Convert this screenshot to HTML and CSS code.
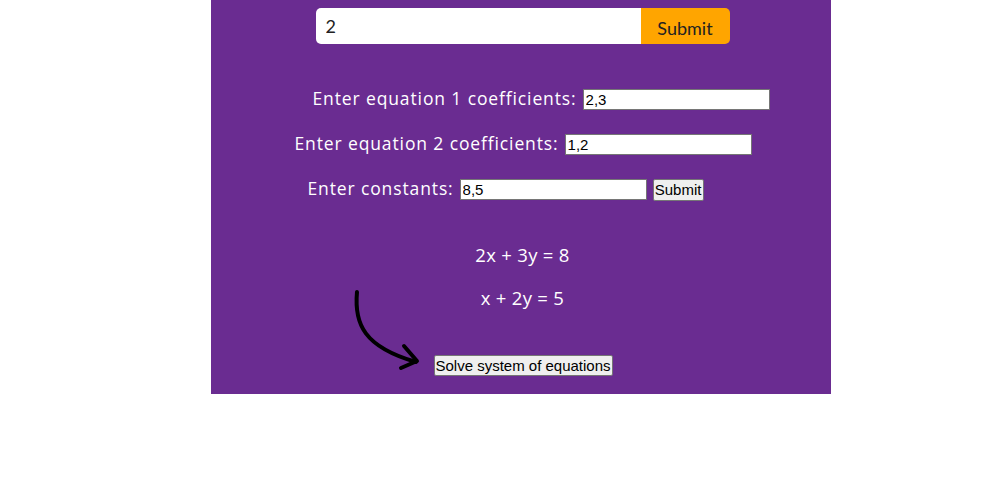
FILE: index.html
```html
<!DOCTYPE html>
<html lang="en">
<head>
<meta charset="utf-8">
<title>System of equations</title>
<link rel="stylesheet" href="styles.css">
</head>
<body>
<main class="panel">
  <form class="search">
    <input class="search-input" type="text" value="2">
    <button class="search-btn" type="button">Submit</button>
  </form>

  <div class="rows">
    <div class="row row-1">
      <label class="lbl">Enter equation 1 coefficients:</label>
      <input class="field" type="text" value="2,3">
    </div>
    <div class="row row-2">
      <label class="lbl">Enter equation 2 coefficients:</label>
      <input class="field" type="text" value="1,2">
    </div>
    <div class="row row-3">
      <label class="lbl">Enter constants:</label>
      <input class="field" type="text" value="8,5">
      <button class="btn" type="button">Submit</button>
    </div>
  </div>

  <div class="equations">
    <p class="eq">2x + 3y = 8</p>
    <p class="eq">x + 2y = 5</p>
  </div>

  <div class="solve">
    <button class="btn" type="button">Solve system of equations</button>
  </div>

  <svg class="arrow" width="80" height="90" viewBox="0 0 80 90" aria-hidden="true">
    <path d="M5 3 C 2 35, 12 58, 64 73" fill="none" stroke="#000" stroke-width="4" stroke-linecap="round"/>
    <path d="M52 57 L 65 72 L 49 79" fill="none" stroke="#000" stroke-width="4" stroke-linecap="round" stroke-linejoin="round"/>
  </svg>
</main>
</body>
</html>
```

FILE: styles.css
```css
html, body {
  margin: 0;
  padding: 0;
  background: #fff;
}

.panel {
  position: relative;
  width: 620px;
  margin-left: 211px;
  background: #6a2c91;
  padding: 8px 0 18px;
  box-sizing: border-box;
  font-family: "Open Sans", "DejaVu Sans", sans-serif;
  color: #fff;
}

.search {
  display: flex;
  justify-content: center;
  padding-left: 3px;
  margin: 0;
}

.search-input {
  box-sizing: border-box;
  width: 325px;
  height: 36px;
  border: none;
  border-radius: 5px 0 0 5px;
  padding: 0 10px;
  font-family: "Lato", sans-serif;
  font-size: 18px;
  color: #222;
  outline: none;
}

.search-btn {
  box-sizing: border-box;
  width: 89px;
  height: 36px;
  border: none;
  border-radius: 0 5px 5px 0;
  background: #ffa500;
  color: #222;
  font-family: "Lato", sans-serif;
  font-size: 18px;
  padding: 4px 0 0;
}

.rows {
  margin-top: 45px;
  display: flex;
  flex-direction: column;
  gap: 24px;
}

.row {
  display: flex;
  justify-content: center;
  align-items: center;
  gap: 6px;
  height: 21px;
}

.row-1 { padding-left: 40px; }
.row-2 { padding-left: 4px; }
.row-3 { padding-right: 31px; }

.lbl {
  font-size: 17.5px;
  font-weight: 500;
  letter-spacing: 0.88px;
  line-height: 21px;
  margin-top: -2px;
  white-space: nowrap;
}

.field {
  box-sizing: border-box;
  width: 187px;
  height: 21px;
  font-family: "Liberation Sans", Arial, sans-serif;
  font-size: 15px;
  padding: 0 2px;
  border: 1px solid #767676;
  background: #fff;
  color: #000;
}

.btn {
  box-sizing: border-box;
  font-family: "Liberation Sans", Arial, sans-serif;
  font-size: 15px;
  line-height: 17px;
  color: #000;
  background: #efefef;
  border: 1px solid #767676;
  border-radius: 2px;
  padding: 1px 0;
  height: 22px;
  white-space: nowrap;
}

.row-3 .btn { width: 51px; }

.equations {
  margin-top: 44px;
  padding-left: 3px;
  text-align: center;
}

.eq {
  margin: 0 0 21px;
  font-size: 18.5px;
  font-weight: 500;
  letter-spacing: 0.3px;
  line-height: 22px;
}

.eq:last-child { margin-bottom: 0; }

.solve {
  margin-top: 46px;
  display: flex;
  justify-content: center;
  padding-left: 4px;
}

.solve .btn {
  width: 179px;
  height: 21px;
  padding: 0;
}

.arrow {
  position: absolute;
  left: 141px;
  top: 289px;
}
```
